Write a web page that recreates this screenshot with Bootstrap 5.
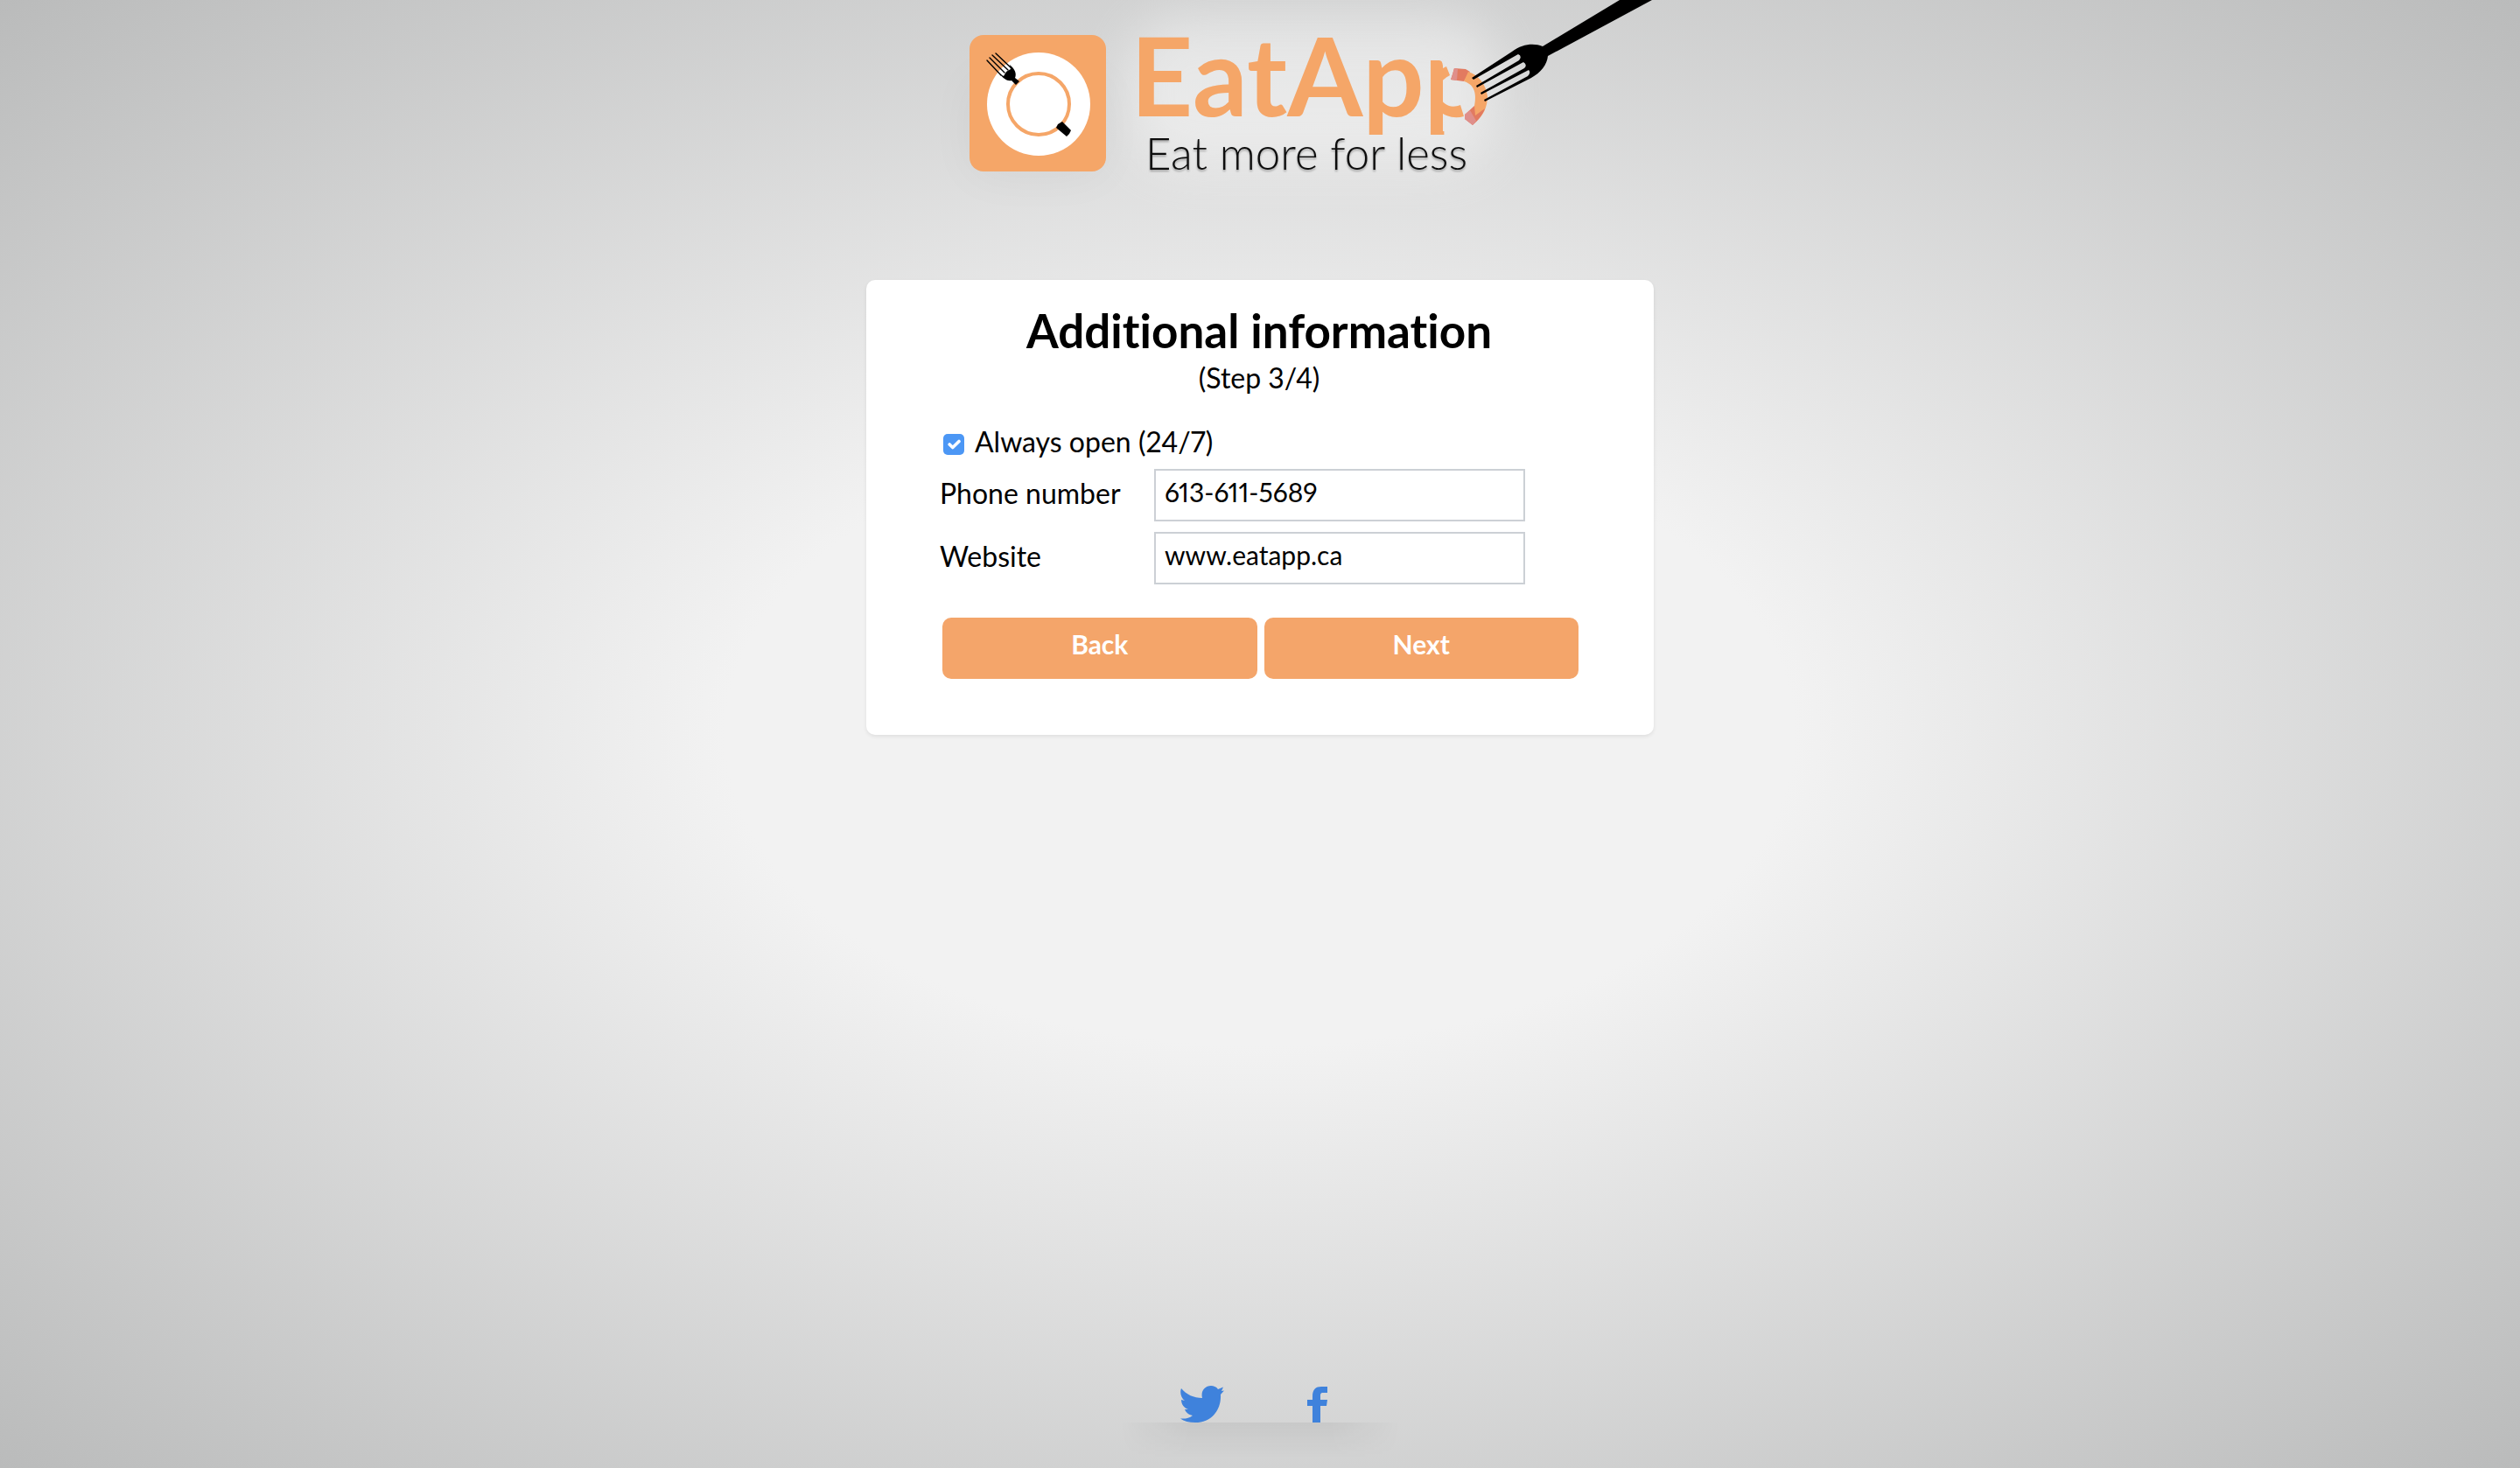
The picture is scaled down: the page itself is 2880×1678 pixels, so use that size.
<!DOCTYPE html>
<html lang="en">
<head>
<meta charset="utf-8">
<meta name="viewport" content="width=device-width, initial-scale=1">
<title>EatApp - Additional information</title>
<link href="https://cdn.jsdelivr.net/npm/bootstrap@5.3.0/dist/css/bootstrap.min.css" rel="stylesheet">
<style>
body {
  font-family: Lato, "Open Sans", sans-serif;
  font-size: 32px;
  line-height: 40px;
  font-variant-ligatures: none;
  font-variant-numeric: proportional-nums;
  color: #000;
  background: radial-gradient(ellipse farthest-corner at center, #f2f2f2 30%, #babbbb 100%) no-repeat;
}
.signup-col { width: 900px; max-width: 100%; }
.brand-art { display: block; width: 100%; height: auto; }
.brand-name { font: 700 124px Lato, sans-serif; fill: #f5a668; }
.brand-tag { font: 300 51px Lato, sans-serif; fill: #111; }
.signup-card { background: #fff; border-radius: 10px; box-shadow: 0 2px 4px rgba(0,0,0,.08); padding: 30px 86px 64px 84px; margin-top: 80px; }
.signup-card h1 { font-size: 53px; line-height: 56px; font-weight: 700; }
.step-note { line-height: 52px; }
.open-row { margin-top: 24px; height: 54px; gap: 12px; padding: 3px 0 0 4px; }
.open-row .form-check-input { width: 24px; height: 24px; margin: 11px 0 0; border-radius: 5px; border: 0; }
.open-row .form-check-input:checked { background-color: #4c97f5; }
.field-row { margin-bottom: 12px; }
.field-row label { width: 245px; padding-bottom: 4px; }
.field-row .form-control {
  width: 424px; height: 60px; border: 2px solid #ccd0d5; border-radius: 0; font-variant-numeric: inherit;
  font-size: 30px; line-height: 40px; padding: 4px 10px 12px; color: #000; background: #fff;
}
.btn-row { gap: 8px; margin: 38px 0 0 3px; }
.btn-eat {
  --bs-btn-color: #fff; --bs-btn-bg: #f4a56a; --bs-btn-hover-color: #fff; --bs-btn-hover-bg: #ec9857;
  --bs-btn-border-width: 0; --bs-btn-border-radius: 10px;
  --bs-btn-font-size: 30px; --bs-btn-font-weight: 700;
  height: 70px; line-height: 40px; padding: 10px 12px 20px;
}
.social-bar { position: relative; width: 320px; height: 94px; padding: 0 0 52px 69px; gap: 95px; }
.social-bar a { color: #3f82dc; line-height: 0; }
.social-bar::after {
  content: ""; position: absolute; left: 0; right: 0; bottom: 12px; height: 40px; z-index: -1;
  background: linear-gradient(rgba(0,0,0,.06), transparent);
  -webkit-mask-image: linear-gradient(90deg, transparent, #000 25%, #000 75%, transparent);
  mask-image: linear-gradient(90deg, transparent, #000 25%, #000 75%, transparent);
}
</style>
</head>
<body>
<div class="d-flex flex-column align-items-center min-vh-100">
  <header class="signup-col">
    <svg class="brand-art" viewBox="990 0 900 240" role="img" aria-label="EatApp, eat more for less">
      <defs>
        <filter id="soft" x="-40%" y="-80%" width="180%" height="260%"><feGaussianBlur stdDeviation="28"/></filter>
        <filter id="drop" x="-5%" y="-20%" width="110%" height="150%"><feDropShadow dx="0" dy="2" stdDeviation="1" flood-opacity=".3"/></filter>
        <mask id="bite" maskUnits="userSpaceOnUse" x="990" y="0" width="900" height="240">
          <rect x="990" y="0" width="900" height="240" fill="#fff"/>
          <path d="M1649 60H1730V150H1649Z" fill="#000"/>
        </mask>
      </defs>
      <rect x="1110" y="90" width="150" height="110" fill="#000" opacity=".04" filter="url(#soft)"/>
      <rect x="1290" y="20" width="420" height="170" rx="60" fill="#fff" opacity=".42" filter="url(#soft)"/>
      <!-- plate badge -->
      <rect x="1108" y="40" width="156" height="156" rx="16" fill="#f5a668"/>
      <circle cx="1187" cy="119" r="59" fill="#fff"/>
      <circle cx="1187" cy="119" r="35" fill="none" stroke="#f5a668" stroke-width="4"/>
      <g stroke="#000" stroke-width="1.4" stroke-linecap="round">
        <path d="M1128 69 1144 86M1131 66 1148 83M1134 63 1152 80M1138 61 1156 78"/>
      </g>
      <path d="M1142 84 1147 87 1150 82 1155 79 1154 74C1160 79 1162 84 1160 89L1165 93 1161 97 1156 92C1151 93 1147 90 1142 84Z"/>
      <path d="M1214 139 1224 149 1222 153 1219 156 1207 146 1209 142Z"/>
      <!-- wordmark -->
      <text class="brand-name" x="1292" y="133" mask="url(#bite)">EatApp</text>
      <path d="M1645 80 1653 76 1657 86C1651 89 1647 93 1645 97ZM1645 110C1650 121 1659 124 1669 120L1673 133C1662 136 1652 133 1645 127Z" fill="#f5a668"/>
      <path d="M1662 78 1675 79 1680 82 1673 93 1658 91 1660 85Z" fill="#e27a60"/>
      <path d="M1662 78 1666 79 1665 92 1658 91 1660 85Z" fill="#df8f8b"/>
      <path d="M1678 82C1690 86 1698 96 1700 110 1700 122 1695 133 1687 138L1684 126C1688 110 1687 97 1673 93Z" fill="#f5a668"/>
      <path d="M1685 121 1686 132 1697 124C1694 132 1689 138 1683 143L1674 136 1674 131Z" fill="#e27a60"/>
      <path d="M1680 126 1687 138 1683 143 1674 136 1674 131Z" fill="#df8f8b"/>
      <text class="brand-tag" x="1309" y="194" filter="url(#drop)">Eat more for less</text>
      <!-- fork -->
      <path d="M1851 0H1888L1769 64C1768 74 1761 83 1750 89L1697 116 1696 114 1746 87Q1750 83 1747 80L1693 108 1692 106 1742 78Q1746 74 1741 71L1688 100 1687 98 1736 69Q1740 64 1735 62L1684 91 1682 89 1728 59C1740 50 1753 49 1763 53Z"/>
    </svg>
  </header>

  <main class="signup-col">
    <form class="signup-card">
      <h1 class="text-center mb-0">Additional information</h1>
      <p class="step-note text-center mb-0">(Step 3/4)</p>
      <div class="open-row d-flex align-items-start">
        <input class="form-check-input flex-shrink-0" type="checkbox" id="always" checked>
        <label for="always">Always open (24/7)</label>
      </div>
      <div class="field-row d-flex align-items-center">
        <label for="phone">Phone number</label>
        <input class="form-control" type="text" id="phone" value="613-611-5689">
      </div>
      <div class="field-row d-flex align-items-center">
        <label for="site">Website</label>
        <input class="form-control" type="text" id="site" value="www.eatapp.ca">
      </div>
      <div class="btn-row d-flex">
        <button class="btn btn-eat flex-fill w-50" type="button">Back</button>
        <button class="btn btn-eat flex-fill w-50" type="button">Next</button>
      </div>
    </form>
  </main>

  <footer class="social-bar d-flex mt-auto">
    <a href="#" aria-label="Twitter"><svg width="50" height="42" viewBox="0 0 50 42" fill="currentColor"><path d="M1 3C7 10 15 14 25 14 23 6 28 0 35 0 38 0 41 1 43 4L49 1.500 47 6 50 5.500 46 10C47 27 36 42 17 42 10 42 4 40.500 0 37.500 6 38 10 37 14 34 9 33 6 30 5 27H9C4 25 1 21 1 16L5 17C1 14-1 8 1 3Z"/></svg></a>
    <a href="#" aria-label="Facebook"><svg width="24" height="42" viewBox="0 0 24 42" fill="currentColor"><path d="M6 42V23H0V16H6V12C6 4 10 1 16 1H23V8H18C15 8 15 10 15 12V16H23L22 23H15V42Z"/></svg></a>
  </footer>
</div>
<script src="https://cdn.jsdelivr.net/npm/bootstrap@5.3.0/dist/js/bootstrap.bundle.min.js"></script>
</body>
</html>
